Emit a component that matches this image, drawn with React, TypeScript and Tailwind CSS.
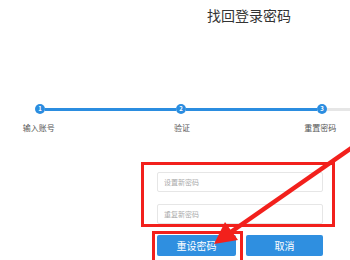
import React from "react";

const font = { fontFamily: '"Noto Sans CJK SC", "Noto Sans", sans-serif' };

function Dot({ n }: { n: number }) {
  return (
    <div className="w-[10px] h-[10px] rounded-full bg-[#2b8de0] flex items-center justify-center text-[6px] leading-none font-bold text-white shrink-0">
      {n}
    </div>
  );
}

export default function App() {
  return (
    <div className="relative w-[350px] h-[260px] overflow-hidden bg-white" style={font}>
      {/* heading */}
      <div className="pt-[7px] pl-[207px] text-[14px] leading-[16px] text-[#333]">找回登录密码</div>

      {/* steps */}
      <div className="mt-[81px] flex items-center pl-[35px]">
        <Dot n={1} />
        <div className="h-[3px] w-[131px] bg-[#2b8de0]" />
        <Dot n={2} />
        <div className="h-[3px] w-[131px] bg-[#2b8de0]" />
        <Dot n={3} />
        <div className="h-[3px] flex-1 bg-[#e6e6e6]" />
      </div>
      <div className="mt-[9px] flex text-[8px] leading-[10px] text-[#555]">
        <div className="ml-[9px] w-[60px] text-center">输入账号</div>
        <div className="ml-[84px] w-[60px] text-center">验证</div>
        <div className="ml-[79px] w-[60px] text-center">重置密码</div>
      </div>

      {/* form */}
      <div className="mt-[39px] ml-[157px] w-[166px] flex flex-col gap-[12px]">
        <input
          placeholder="设置新密码"
          className="h-[20px] w-full rounded-[2px] border border-[#e6e6e6] px-[6px] text-[7px] outline-none placeholder:text-[#aaa]"
        />
        <input
          placeholder="重复新密码"
          className="h-[20px] w-full rounded-[2px] border border-[#e6e6e6] px-[6px] text-[7px] outline-none placeholder:text-[#aaa]"
        />
        <div className="mt-[-1px] flex gap-[10px]">
          <button className="h-[21px] w-[79px] rounded-[2px] bg-[#2f8fe0] text-[10px] text-white">重设密码</button>
          <button className="h-[21px] w-[77px] rounded-[2px] bg-[#2f8fe0] text-[10px] text-white">取消</button>
        </div>
      </div>

      {/* annotations */}
      <div className="absolute left-[141px] top-[162px] w-[194px] h-[65px] border-[3px] border-[#f2201c]" />
      <div className="absolute left-[152px] top-[231px] w-[91px] h-[40px] border-[3px] border-[#f2201c]" />
      <svg className="absolute inset-0" width={350} height={260} viewBox="0 0 350 260">
        <line x1={360} y1={142} x2={228} y2={234} stroke="#f2201c" strokeWidth={4.5} />
        <polygon points="214,244 238,240 225,222" fill="#f2201c" />
      </svg>
    </div>
  );
}
